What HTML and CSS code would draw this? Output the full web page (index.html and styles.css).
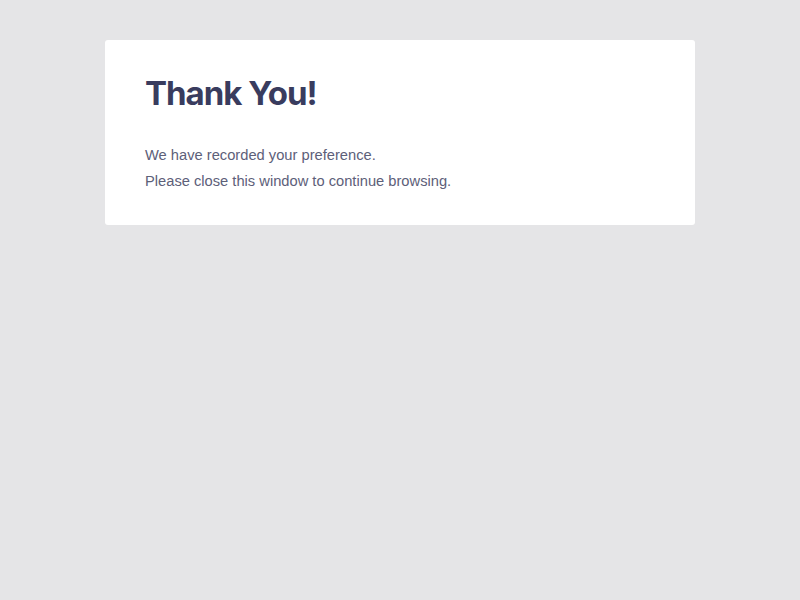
FILE: index.html
```html
<!DOCTYPE html>
<html lang="en">
<head>
<meta charset="utf-8">
<title>Thank You</title>
<link rel="stylesheet" href="styles.css">
</head>
<body>
<main class="page">
  <section class="card">
    <h1 class="title">Thank You!</h1>
    <p class="text">We have recorded your preference.</p>
    <p class="text">Please close this window to continue browsing.</p>
  </section>
</main>
</body>
</html>
```

FILE: styles.css
```css
html, body {
  margin: 0;
  padding: 0;
  background: #e5e5e7;
  height: 100%;
}
.page {
  padding: 40px 105px;
}
.card {
  background: #ffffff;
  border-radius: 3px;
  padding: 30px 40px 31px;
}
.title {
  margin: 0 0 26px;
  font-family: Inter, "Liberation Sans", sans-serif;
  font-weight: 700;
  font-size: 33px;
  line-height: 46px;
  letter-spacing: -1px;
  color: #393c5e;
}
.text {
  margin: 0;
  font-family: "Liberation Sans", Arial, sans-serif;
  font-size: 14.7px;
  line-height: 26px;
  color: #5d6079;
}
```
